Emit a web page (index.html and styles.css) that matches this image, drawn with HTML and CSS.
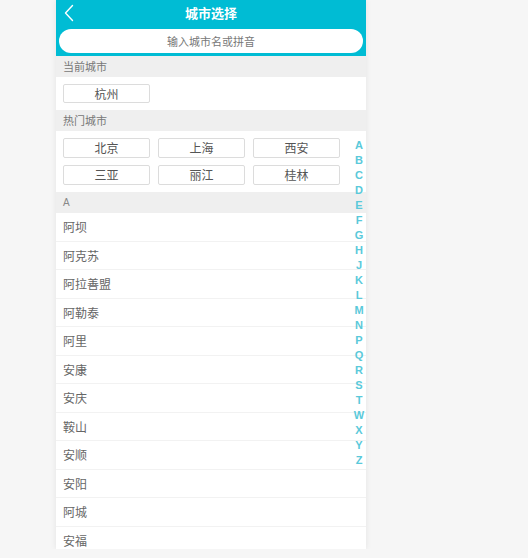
FILE: index.html
```html
<!DOCTYPE html>
<html lang="zh-CN">
<head>
<meta charset="utf-8">
<title>城市选择</title>
<link rel="stylesheet" href="styles.css">
</head>
<body>
<div class="phone">
  <header class="header">
    <div class="title-row">
      <svg class="back" width="10" height="18" viewBox="0 0 10 18"><path d="M8.5 1.5 L1.5 9 L8.5 16.5" fill="none" stroke="#fff" stroke-width="1.4" stroke-linecap="round" stroke-linejoin="round"/></svg>
      <span class="title">城市选择</span>
    </div>
    <div class="search">输入城市名或拼音</div>
  </header>
  <div class="label">当前城市</div>
  <div class="btn-area current">
    <div class="city-btn">杭州</div>
  </div>
  <div class="label">热门城市</div>
  <div class="btn-area hot">
    <div class="city-btn">北京</div>
    <div class="city-btn">上海</div>
    <div class="city-btn">西安</div>
    <div class="city-btn">三亚</div>
    <div class="city-btn">丽江</div>
    <div class="city-btn">桂林</div>
  </div>
  <div class="label letter">A</div>
  <ul class="list">
    <li>阿坝</li>
    <li>阿克苏</li>
    <li>阿拉善盟</li>
    <li>阿勒泰</li>
    <li>阿里</li>
    <li>安康</li>
    <li>安庆</li>
    <li>鞍山</li>
    <li>安顺</li>
    <li>安阳</li>
    <li>阿城</li>
    <li>安福</li>
  </ul>
  <div class="index">
    <span>A</span><span>B</span><span>C</span><span>D</span><span>E</span><span>F</span><span>G</span><span>H</span><span>J</span><span>K</span><span>L</span><span>M</span><span>N</span><span>P</span><span>Q</span><span>R</span><span>S</span><span>T</span><span>W</span><span>X</span><span>Y</span><span>Z</span>
  </div>
</div>
</body>
</html>
```
FILE: styles.css
```css
html, body {
  margin: 0;
  padding: 0;
  background: #f6f6f6;
}
body {
  font-family: "Noto Sans CJK SC", "Liberation Sans", sans-serif;
  color: #666;
}
.phone {
  position: relative;
  margin-left: 56px;
  width: 310px;
  height: 549px;
  background: #fff;
  overflow: hidden;
  box-shadow: 0 0 6px rgba(0, 0, 0, 0.08);
}
.header {
  background: #00bcd4;
  padding: 0 3px 3px;
}
.title-row {
  position: relative;
  height: 29px;
  display: flex;
  align-items: center;
  justify-content: center;
}
.back {
  position: absolute;
  left: 5px;
  top: 4px;
}
.title {
  color: #fff;
  font-size: 13px;
  font-weight: bold;
  line-height: 1;
  margin-top: -4px;
}
.search {
  height: 24px;
  border-radius: 12px;
  background: #fff;
  color: #777;
  font-size: 11px;
  line-height: 24px;
  text-align: center;
}
.label {
  height: 21px;
  line-height: 21px;
  background: #efefef;
  color: #777;
  font-size: 11px;
  padding-left: 7px;
}
.label.letter {
  font-family: "Liberation Sans", sans-serif;
  font-size: 10px;
  color: #888;
}
.btn-area {
  display: grid;
  grid-template-columns: 87px 87px 87px;
  column-gap: 8px;
  row-gap: 7px;
  padding: 7px 0 7px 7px;
}
.btn-area.current .city-btn {
  height: 19px;
  line-height: 17px;
}
.city-btn {
  box-sizing: border-box;
  height: 20px;
  line-height: 18px;
  border: 1px solid #dcdcdc;
  border-radius: 2px;
  text-align: center;
  font-size: 12px;
  color: #555;
  background: #fff;
}
.list {
  list-style: none;
  margin: 0;
  padding: 0;
}
.list li {
  box-sizing: border-box;
  height: 28.5px;
  line-height: 28px;
  padding-left: 7px;
  font-size: 12px;
  color: #666;
  border-bottom: 1px solid #f2f2f2;
}
.index {
  position: absolute;
  left: 296px;
  top: 138px;
  width: 14px;
  display: flex;
  flex-direction: column;
  align-items: center;
}
.index span {
  height: 15px;
  line-height: 15px;
  font-family: "Liberation Sans", sans-serif;
  font-size: 11px;
  font-weight: bold;
  color: #5ac9da;
}
```
